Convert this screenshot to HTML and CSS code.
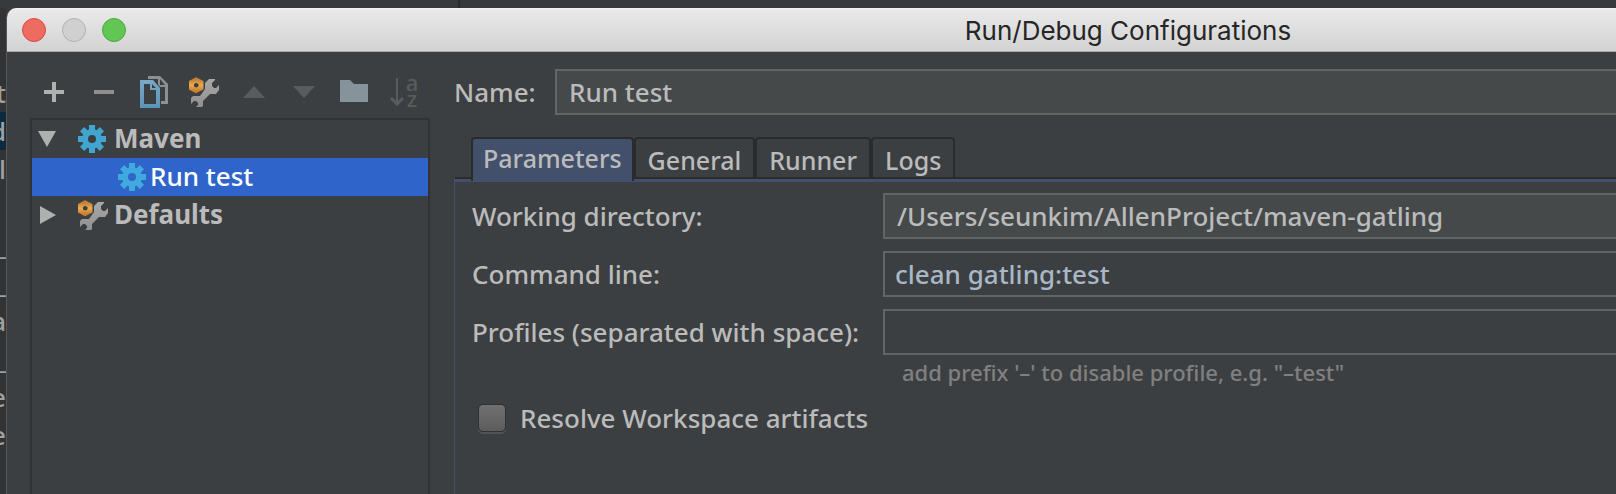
FILE: index.html
```html
<!DOCTYPE html>
<html lang="en">
<head>
<meta charset="utf-8">
<title>Run/Debug Configurations</title>
<link rel="stylesheet" href="styles.css">
</head>
<body>
<svg class="defs" aria-hidden="true">
  <defs>
    <linearGradient id="steel" x1="0" y1="0" x2="0" y2="1"><stop offset="0" stop-color="#a8a8a8"/><stop offset="1" stop-color="#8e8e8e"/></linearGradient>
    <linearGradient id="page" x1="0" y1="0" x2="0" y2="1"><stop offset="0" stop-color="#78a9c8"/><stop offset="1" stop-color="#5b93b9"/></linearGradient>
    <linearGradient id="nut" x1="0" y1="0" x2="0" y2="1"><stop offset="0" stop-color="#c5803c"/><stop offset=".5" stop-color="#e9ad4c"/><stop offset="1" stop-color="#c98231"/></linearGradient>
    <symbol id="gear" viewBox="0 0 28 28">
      <g fill="currentColor">
        <rect x="11" y="0" width="6" height="7"/><rect x="11" y="21" width="6" height="7"/>
        <rect x="0" y="11" width="7" height="6"/><rect x="21" y="11" width="7" height="6"/>
        <g transform="rotate(45 14 14)"><rect x="11" y="0" width="6" height="7"/><rect x="11" y="21" width="6" height="7"/><rect x="0" y="11" width="7" height="6"/><rect x="21" y="11" width="7" height="6"/></g>
      </g>
      <circle cx="14" cy="14" r="7" fill="none" stroke="currentColor" stroke-width="6"/>
    </symbol>
    <symbol id="tools" viewBox="0 0 30 30">
      <path fill="url(#steel)" d="M16 12V6l4-4h6v1l-3 3v3l2 2h2l3-3v5l-3 4h-6l-7 7v5l-3 3H6v-1l3-3v-2l-2-2H5l-3 3v-6l2-2h7z"/>
      <path fill="none" stroke="url(#nut)" stroke-width="5" d="M7 3l5 2.500v5.500l-5 2.500-4.500-2.500V5.500z"/>
    </symbol>
  </defs>
</svg>
<div class="desktop">
  <div class="editor-edge" aria-hidden="true">
    <span>t</span><span class="current">d</span><span>l</span><span></span><span>_</span><span>_</span><span>a</span><span>_</span><span>e</span><span>e</span>
  </div>
  <div class="dialog" role="dialog" aria-labelledby="title">
    <header class="titlebar">
      <div class="lights">
        <button class="light close" aria-label="Close"></button>
        <button class="light minimize" aria-label="Minimize" disabled></button>
        <button class="light zoom" aria-label="Zoom"></button>
      </div>
      <h1 id="title">Run/Debug Configurations</h1>
    </header>
    <div class="content">
      <aside class="sidebar">
        <div class="toolbar" role="toolbar">
          <button aria-label="Add"><svg viewBox="0 0 32 32"><path fill="#afb1b1" d="M6 14h8V6h4v8h8v4h-8v8h-4v-8H6z"/></svg></button>
          <button aria-label="Remove"><svg viewBox="0 0 32 32"><path fill="#8f8f90" d="M6 14h20v4H6z"/></svg></button>
          <button aria-label="Copy"><svg viewBox="0 0 32 32"><path fill="#8f8f8f" fill-rule="evenodd" d="M10 0h12l8 8v20h-8v-3h5V11h-7V3H10zM22 3v6h5z"/><path fill="#3c3f41" d="M0 3h15l8 9v20H0z"/><path fill="url(#page)" fill-rule="evenodd" d="M2 4h13l7 8v20H2zM6 8v20h12V14h-6V8zM14 8v4h4z"/></svg></button>
          <button aria-label="Edit defaults"><svg class="tools"><use href="#tools"/></svg></button>
          <button aria-label="Move up" disabled><svg viewBox="0 0 32 32"><path fill="#5a5b5b" d="M16 10l11 12H5z"/></svg></button>
          <button aria-label="Move down" disabled><svg viewBox="0 0 32 32"><path fill="#5a5b5b" d="M16 10v12l11-12H5l11 12z"/></svg></button>
          <button aria-label="New folder"><svg viewBox="0 0 32 32"><path fill="#87939a" d="M2 4h10l4 4h14v18H2z"/></svg></button>
          <button class="sort" aria-label="Sort configurations" disabled><svg viewBox="0 0 14 28"><path fill="none" stroke="#5a5b5b" stroke-width="2" d="M7 0v26"/><path fill="none" stroke="#5a5b5b" stroke-width="3" d="M1 20l6 6 6-6"/></svg><span class="letters"><span>a</span><span>z</span></span></button>
        </div>
        <ul class="tree" role="tree">
          <li role="treeitem" aria-expanded="true"><svg class="twist" viewBox="0 0 18 16"><path fill="#afb1b1" d="M0 0h18L9 16z"/></svg><svg class="gear"><use href="#gear"/></svg><span>Maven</span></li>
          <li class="child selected" role="treeitem" aria-selected="true"><svg class="gear"><use href="#gear"/></svg><span>Run test</span></li>
          <li role="treeitem" aria-expanded="false"><svg class="twist" viewBox="0 0 18 18"><path fill="#afb1b1" d="M2 0l16 9L2 18z"/></svg><svg class="tools"><use href="#tools"/></svg><span>Defaults</span></li>
        </ul>
      </aside>
      <main class="editor">
        <div class="name-row">
          <label for="name">Name:</label>
          <input class="field raised" id="name" type="text" value="Run test">
        </div>
        <div class="tabs" role="tablist">
          <button class="tab active" role="tab" aria-selected="true">Parameters</button>
          <button class="tab" role="tab">General</button>
          <button class="tab" role="tab">Runner</button>
          <button class="tab" role="tab">Logs</button>
        </div>
        <section class="panel" role="tabpanel">
          <div class="form">
            <label for="dir">Working directory:</label>
            <input class="field raised" id="dir" type="text" value="/Users/seunkim/AllenProject/maven-gatling">
            <label for="cmd">Command line:</label>
            <input class="field code" id="cmd" type="text" value="clean gatling:test">
            <label for="profiles">Profiles (separated with space):</label>
            <input class="field" id="profiles" type="text" aria-describedby="hint">
          </div>
          <p class="hint" id="hint">add prefix '–' to disable profile, e.g. "–test"</p>
          <label class="check"><input type="checkbox">Resolve Workspace artifacts</label>
        </section>
      </main>
    </div>
  </div>
</div>
</body>
</html>
```
FILE: styles.css
```css
* { box-sizing: border-box; }

body {
  margin: 0;
  background: #313335;
  color: #bbbbbb;
  font: 500 26px/38px "Noto Sans", "Open Sans", sans-serif;
  overflow: hidden;
}

button, input { font: inherit; color: inherit; }
button { padding: 0; border: 0; background: none; }
svg { display: block; flex: none; }
.defs { position: absolute; width: 0; height: 0; }

.desktop {
  display: flex;
  min-height: 100vh;
  padding-top: 8px;
  background: linear-gradient(90deg, #373a3c 458px, #2b2b2b 458px, #2b2b2b 460px, #373a3c 460px);
}

.editor-edge {
  display: flex;
  flex-direction: column;
  flex: none;
  width: 6px;
  padding-top: 66px;
  overflow: hidden;
  background: #313335;
  color: #a0a0a0;
}
.editor-edge span { display: flex; justify-content: flex-end; height: 38px; }
.editor-edge .current { background: #0d293e; }

.dialog {
  flex: 1;
  min-width: 0;
  display: flex;
  flex-direction: column;
  border-left: 1px solid #55585a;
  border-top-left-radius: 10px;
  background: #3c3f41;
  overflow: hidden;
}

.titlebar {
  display: flex;
  align-items: center;
  height: 44px;
  padding-left: 15px;
  border-bottom: 1px solid #a9a9a9;
  background: linear-gradient(#f4f4f4, #e9e9e9 2px, #d3d3d3);
}
.lights { display: flex; gap: 16px; width: 618px; }
.light { width: 24px; height: 24px; border: 1px solid; border-radius: 50%; }
.close { background: #ed6b60; border-color: #dc4a41; }
.minimize { background: #d0d0d0; border-color: #b0b0b0; }
.zoom { background: #62c655; border-color: #4aaa3b; }
.titlebar h1 {
  flex: 1;
  margin: 0;
  padding-top: 2px;
  color: #262626;
  font: 26px/38px Inter, Roboto, sans-serif;
  text-align: center;
}

.content { display: flex; flex: 1; gap: 24px; padding-left: 23px; }

.sidebar { display: flex; flex-direction: column; flex: none; width: 400px; padding-top: 22px; }
.toolbar { display: flex; height: 44px; }
.toolbar button { display: flex; align-items: center; justify-content: center; width: 50px; height: 36px; padding-right: 2px; }
.toolbar svg { width: 32px; height: 32px; }
.toolbar .tools, .tree .tools { width: 30px; height: 30px; }
.toolbar .sort { gap: 2px; color: #5a5b5b; }
.toolbar .sort svg { width: 14px; height: 28px; }
.letters { display: flex; flex-direction: column; padding-bottom: 4px; font-size: 22px; line-height: 16px; }

.tree {
  flex: 1;
  margin: 0;
  padding: 0;
  border: 2px solid #323232;
  border-bottom: 0;
  list-style: none;
  font-weight: bold;
}
.tree li { display: flex; align-items: center; height: 38px; padding-left: 6px; }
.tree span { padding-bottom: 2px; }
.tree .twist { width: 18px; height: 18px; margin-right: 22px; }
.tree .gear { width: 28px; height: 28px; margin-right: 8px; color: #40a5d0; }
.tree .tools { margin-right: 6px; }
.tree .child { padding-left: 86px; font-weight: 500; }
.tree .child .gear { margin-right: 4px; color: #40aade; }
.tree .selected { background: #2f65ca; color: #ffffff; }

.editor { display: flex; flex-direction: column; flex: 1; min-width: 0; padding-top: 17px; }
.name-row { display: flex; align-items: center; }
.name-row label { flex: none; width: 101px; }

.field {
  flex: 1;
  width: 100%;
  min-width: 0;
  height: 46px;
  padding: 0 12px;
  border: 2px solid #646464;
  border-right: 0;
  border-radius: 0;
  background: #3c3f41;
  outline: 0;
}
.raised { background: #45494a; }
.code { padding-left: 10px; color: #a9b7c6; }

.tabs { display: flex; padding: 22px 0 0 17px; font-size: 25px; }
.tab {
  height: 40px;
  padding: 2px 12px 0;
  border: 2px solid #2b2b2b;
  border-bottom: 0;
  border-radius: 4px 4px 0 0;
}
.tab.active { z-index: 1; height: 44px; margin-bottom: -4px; padding: 0 10px 4px; line-height: 34px; background: #43506c; }

.panel {
  flex: 1;
  padding: 11px 0 0 17px;
  border-top: 2px solid #2b2b2b;
  border-left: 1px solid #43506c;
  box-shadow: inset 0 3px #43506c;
}
.form { display: grid; grid-template-columns: 411px 1fr; row-gap: 12px; align-items: center; padding-top: 3px; }
.hint { margin: 0; padding-left: 430px; color: #808080; font-size: 22px; line-height: 34px; }

.check { display: flex; align-items: center; gap: 14px; padding: 10px 0 0 6px; }
.check input {
  appearance: none;
  width: 28px;
  height: 28px;
  margin: 0;
  border: 1px solid #2f3133;
  border-radius: 5px;
  background: linear-gradient(#707070, #5d5d5d);
  box-shadow: 0 2px #505253;
}
```
